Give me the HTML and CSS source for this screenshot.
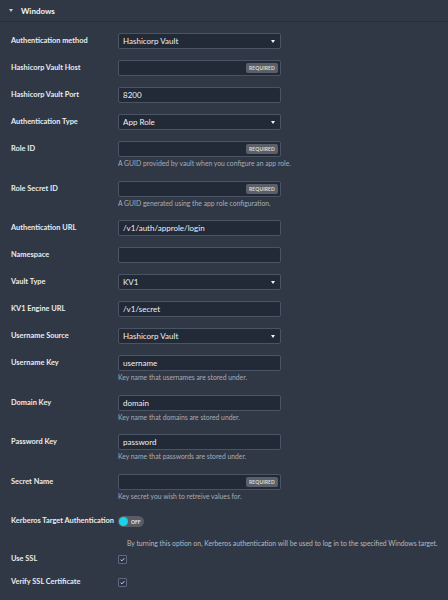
FILE: index.html
```html
<!DOCTYPE html>
<html lang="en">
<head>
    <meta charset="utf-8" />
    <meta name="viewport" content="width=device-width, initial-scale=1" />
    <title>Windows - Credentials</title>
    <link rel="stylesheet" href="styles.css">
</head>
<body>
    <div class="section">
        <div class="section-header">
            <span class="caret"></span>
            <span class="section-title">Windows</span>
        </div>

        <div class="section-body">
            <div class="field">
                <label>Authentication method</label>
                <div class="control">
                    <div class="input select">Hashicorp Vault</div>
                </div>
            </div>

            <div class="field">
                <label>Hashicorp Vault Host</label>
                <div class="control">
                    <div class="input"><span class="badge">REQUIRED</span></div>
                </div>
            </div>

            <div class="field">
                <label>Hashicorp Vault Port</label>
                <div class="control">
                    <div class="input">8200</div>
                </div>
            </div>

            <div class="field">
                <label>Authentication Type</label>
                <div class="control">
                    <div class="input select">App Role</div>
                </div>
            </div>

            <div class="field">
                <label>Role ID</label>
                <div class="control">
                    <div class="input"><span class="badge">REQUIRED</span></div>
                    <div class="help">A GUID provided by vault when you configure an app role.</div>
                </div>
            </div>

            <div class="field">
                <label>Role Secret ID</label>
                <div class="control">
                    <div class="input"><span class="badge">REQUIRED</span></div>
                    <div class="help">A GUID generated using the app role configuration.</div>
                </div>
            </div>

            <div class="field">
                <label>Authentication URL</label>
                <div class="control">
                    <div class="input">/v1/auth/approle/login</div>
                </div>
            </div>

            <div class="field">
                <label>Namespace</label>
                <div class="control">
                    <div class="input"></div>
                </div>
            </div>

            <div class="field">
                <label>Vault Type</label>
                <div class="control">
                    <div class="input select">KV1</div>
                </div>
            </div>

            <div class="field">
                <label>KV1 Engine URL</label>
                <div class="control">
                    <div class="input">/v1/secret</div>
                </div>
            </div>

            <div class="field">
                <label>Username Source</label>
                <div class="control">
                    <div class="input select">Hashicorp Vault</div>
                </div>
            </div>

            <div class="field">
                <label>Username Key</label>
                <div class="control">
                    <div class="input">username</div>
                    <div class="help">Key name that usernames are stored under.</div>
                </div>
            </div>

            <div class="field">
                <label>Domain Key</label>
                <div class="control">
                    <div class="input">domain</div>
                    <div class="help">Key name that domains are stored under.</div>
                </div>
            </div>

            <div class="field">
                <label>Password Key</label>
                <div class="control">
                    <div class="input">password</div>
                    <div class="help">Key name that passwords are stored under.</div>
                </div>
            </div>

            <div class="field">
                <label>Secret Name</label>
                <div class="control">
                    <div class="input"><span class="badge">REQUIRED</span></div>
                    <div class="help">Key secret you wish to retreive values for.</div>
                </div>
            </div>

            <div class="field field-toggle">
                <label>Kerberos Target Authentication</label>
                <div class="control">
                    <div class="toggle">
                        <span class="toggle-knob"></span>
                        <span class="toggle-text">OFF</span>
                    </div>
                </div>
            </div>
            <div class="wide-help">By turning this option on, Kerberos authentication will be used to log in to the specified Windows target.</div>

            <div class="field field-check">
                <label>Use SSL</label>
                <div class="control">
                    <span class="checkbox">
                        <svg viewBox="0 0 10 10" width="9" height="9"><path d="M2.4 5.2 L4.2 6.9 L7.6 3.2" fill="none" stroke="#e6e9ee" stroke-width="1.3" /></svg>
                    </span>
                </div>
            </div>

            <div class="field field-check">
                <label>Verify SSL Certificate</label>
                <div class="control">
                    <span class="checkbox">
                        <svg viewBox="0 0 10 10" width="9" height="9"><path d="M2.4 5.2 L4.2 6.9 L7.6 3.2" fill="none" stroke="#e6e9ee" stroke-width="1.3" /></svg>
                    </span>
                </div>
            </div>
        </div>
    </div>
</body>
</html>
```

FILE: styles.css
```css
* {
    margin: 0;
    padding: 0;
    box-sizing: border-box;
}

body {
    font-family: Lato, "Open Sans", "Liberation Sans", sans-serif;
    background: #313845;
    color: #e9ebef;
    min-height: 100vh;
    -webkit-font-smoothing: antialiased;
}

.section-header {
    display: flex;
    align-items: center;
    height: 22px;
    padding-left: 9px;
    border-bottom: 1px solid #282e39;
}

.caret {
    width: 0;
    height: 0;
    border-left: 2.5px solid transparent;
    border-right: 2.5px solid transparent;
    border-top: 3px solid #c8ccd3;
    margin-right: 8px;
}

.section-title {
    font-size: 8px;
    font-weight: 700;
    color: #f1f3f6;
}

.section-body {
    padding: 11px 0 0 11px;
}

.field {
    display: grid;
    grid-template-columns: 107px 163px;
    align-items: start;
    margin-bottom: 11px;
}

.field label {
    font-size: 7.4px;
    font-weight: 700;
    line-height: 16px;
    white-space: nowrap;
    color: #e9ebef;
}

/* text boxes and selects share one look */
.input {
    position: relative;
    height: 16px;
    display: flex;
    align-items: center;
    padding: 0 4px;
    background: #222a37;
    border: 1px solid #4b5465;
    border-radius: 2px;
    font-size: 8px;
    font-weight: 400;
    color: #eef0f3;
}

.select::after {
    content: "";
    position: absolute;
    right: 5px;
    top: 6px;
    border-left: 2.5px solid transparent;
    border-right: 2.5px solid transparent;
    border-top: 3px solid #f2f4f7;
}

.badge {
    position: absolute;
    right: 2px;
    top: 2px;
    height: 10px;
    padding: 0 3px;
    display: flex;
    align-items: center;
    background: #5b5f67;
    border-radius: 2px;
    font-size: 5px;
    font-weight: 700;
    color: #d9dbdf;
    letter-spacing: 0.1px;
}

.help {
    font-size: 6.8px;
    line-height: 12.5px;
    color: #a6acb6;
    white-space: nowrap;
}

.field-toggle {
    margin-bottom: 8px;
}

.toggle {
    margin-top: 3px;
    width: 26px;
    height: 11px;
    border-radius: 6px;
    background: #585d65;
    display: flex;
    align-items: center;
    padding-left: 1px;
}

.toggle-knob {
    width: 9px;
    height: 9px;
    border-radius: 50%;
    background: #1bd3e6;
}

.toggle-text {
    margin-left: 3px;
    font-size: 5px;
    font-weight: 700;
    color: #e6e8ec;
}

.wide-help {
    padding-left: 116px;
    font-size: 6.8px;
    line-height: 12px;
    color: #b3b8c0;
    white-space: nowrap;
    margin-bottom: 2px;
}

.field-check {
    margin-bottom: 7px;
}

.field-check .control {
    display: flex;
    align-items: center;
    height: 16px;
}

.checkbox {
    width: 9px;
    height: 9px;
    display: flex;
    align-items: center;
    justify-content: center;
    background: #2b3446;
    border: 1px solid #5f6a7e;
    border-radius: 1px;
}

.checkbox svg {
    display: block;
}
```
